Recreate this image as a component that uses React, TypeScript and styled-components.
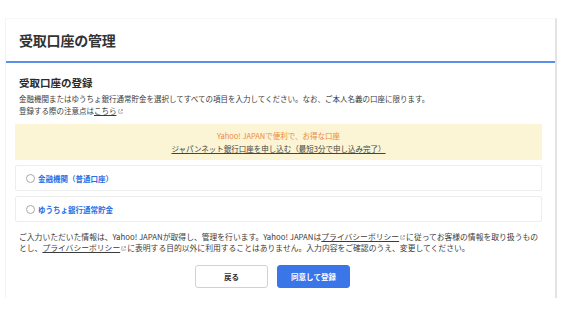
import React from "react"
import styled, { createGlobalStyle } from "styled-components"

const GlobalStyle = createGlobalStyle`
  html, body {
    margin: 0;
    padding: 0;
    background: #ffffff;
  }
  body {
    font-family: "Noto Sans CJK JP", "Noto Sans", sans-serif;
    color: #333333;
  }
`

const Panel = styled.div`
  margin: 18px 0 0 5px;
  width: 552px;
  height: 280px;
  background: #ffffff;
  border-left: 1px solid #f3f3f3;
  border-right: 2px solid #e3e3e3;
  border-top: 1px solid #f7f7f7;
  box-sizing: border-box;
`

const Header = styled.header`
  height: 44px;
  display: flex;
  align-items: center;
  padding-left: 13px;
  border-bottom: 2px solid #5b8fe9;
  box-sizing: border-box;
`

const Title = styled.h1`
  margin: 0;
  font-size: 14px;
  font-weight: 700;
  color: #333333;
  letter-spacing: -0.2px;
`

const Body = styled.div`
  padding: 13px 13px 0 9px;
`

const Intro = styled.div`
  padding-left: 4px;
`

const SectionTitle = styled.h2`
  margin: 0 0 4px;
  font-size: 10.5px;
  line-height: 13px;
  font-weight: 700;
  color: #2b2b2b;
`

const Note = styled.p`
  margin: 0;
  font-size: 7.5px;
  line-height: 12px;
  color: #3c3c3c;
`

const Underlined = styled.a`
  display: inline-block;
  line-height: inherit;
  color: #3c3c3c;
  text-decoration: underline;
`

const Promo = styled.div`
  margin-top: 7px;
  height: 36px;
  background: #fbf4d5;
  display: flex;
  flex-direction: column;
  justify-content: center;
  align-items: center;
  font-size: 7.5px;
  line-height: 13px;
`

const PromoLead = styled.span`
  color: #ec8a3c;
`

const PromoLink = styled.a`
  color: #444444;
  text-decoration: underline;
`

const Choice = styled.label`
  margin-top: 5px;
  height: 26px;
  display: flex;
  align-items: center;
  gap: 3px;
  padding-left: 10px;
  border: 1px solid #ededed;
  border-radius: 2px;
  box-sizing: border-box;
`

const Radio = styled.span`
  width: 7px;
  height: 7px;
  border-radius: 50%;
  border: 1px solid #a8a8a8;
  background: #ffffff;
`

const ChoiceText = styled.span`
  font-size: 7.5px;
  font-weight: 700;
  color: #2c6fe3;
`

const Legal = styled.p`
  margin: 9px 0 0;
  padding-left: 4px;
  font-size: 7.8px;
  line-height: 11px;
  color: #3c3c3c;
  white-space: nowrap;
`

const Actions = styled.div`
  margin-top: 12px;
  display: flex;
  justify-content: center;
  gap: 9px;
  padding-right: 12px;
`

const Button = styled.button`
  width: 73px;
  height: 23px;
  border-radius: 3px;
  font-family: inherit;
  font-size: 7.5px;
  font-weight: 700;
  border: 1px solid ${props => (props.$primary ? "#3a76e8" : "#cfd3d8")};
  background: ${props => (props.$primary ? "#3a76e8" : "#ffffff")};
  color: ${props => (props.$primary ? "#ffffff" : "#333333")};
  padding: 0;
`

const Icon = styled.svg`
  width: 5px;
  height: 5px;
  margin: 0 1px;
`

const ExternalIcon = () => (
  <Icon viewBox="0 0 10 10">
    <path d="M4 1.5H1.5v7h7V6" fill="none" stroke="#888" strokeWidth="1.2" />
    <path d="M6 1h3v3M9 1L5 5" fill="none" stroke="#888" strokeWidth="1.2" />
  </Icon>
)

const App = () => (
  <>
    <GlobalStyle />
    <Panel>
      <Header>
        <Title>受取口座の管理</Title>
      </Header>
      <Body>
        <Intro>
          <SectionTitle>受取口座の登録</SectionTitle>
          <Note>
            金融機関またはゆうちょ銀行通常貯金を選択してすべての項目を入力してください。なお、ご本人名義の口座に限ります。
          </Note>
          <Note>
            登録する際の注意点は<Underlined>こちら</Underlined>
            <ExternalIcon />
          </Note>
        </Intro>
        <Promo>
          <PromoLead>Yahoo! JAPANで便利で、お得な口座</PromoLead>
          <PromoLink>ジャパンネット銀行口座を申し込む（最短3分で申し込み完了）</PromoLink>
        </Promo>
        <Choice>
          <Radio />
          <ChoiceText>金融機関（普通口座）</ChoiceText>
        </Choice>
        <Choice>
          <Radio />
          <ChoiceText>ゆうちょ銀行通常貯金</ChoiceText>
        </Choice>
        <Legal>
          ご入力いただいた情報は、Yahoo! JAPANが取得し、管理を行います。Yahoo! JAPANは
          <Underlined>プライバシーポリシー</Underlined>
          <ExternalIcon />
          に従ってお客様の情報を取り扱うもの
          <br />
          とし、<Underlined>プライバシーポリシー</Underlined>
          <ExternalIcon />
          に表明する目的以外に利用することはありません。入力内容をご確認のうえ、変更してください。
        </Legal>
        <Actions>
          <Button>戻る</Button>
          <Button $primary>同意して登録</Button>
        </Actions>
      </Body>
    </Panel>
  </>
)

export default App
